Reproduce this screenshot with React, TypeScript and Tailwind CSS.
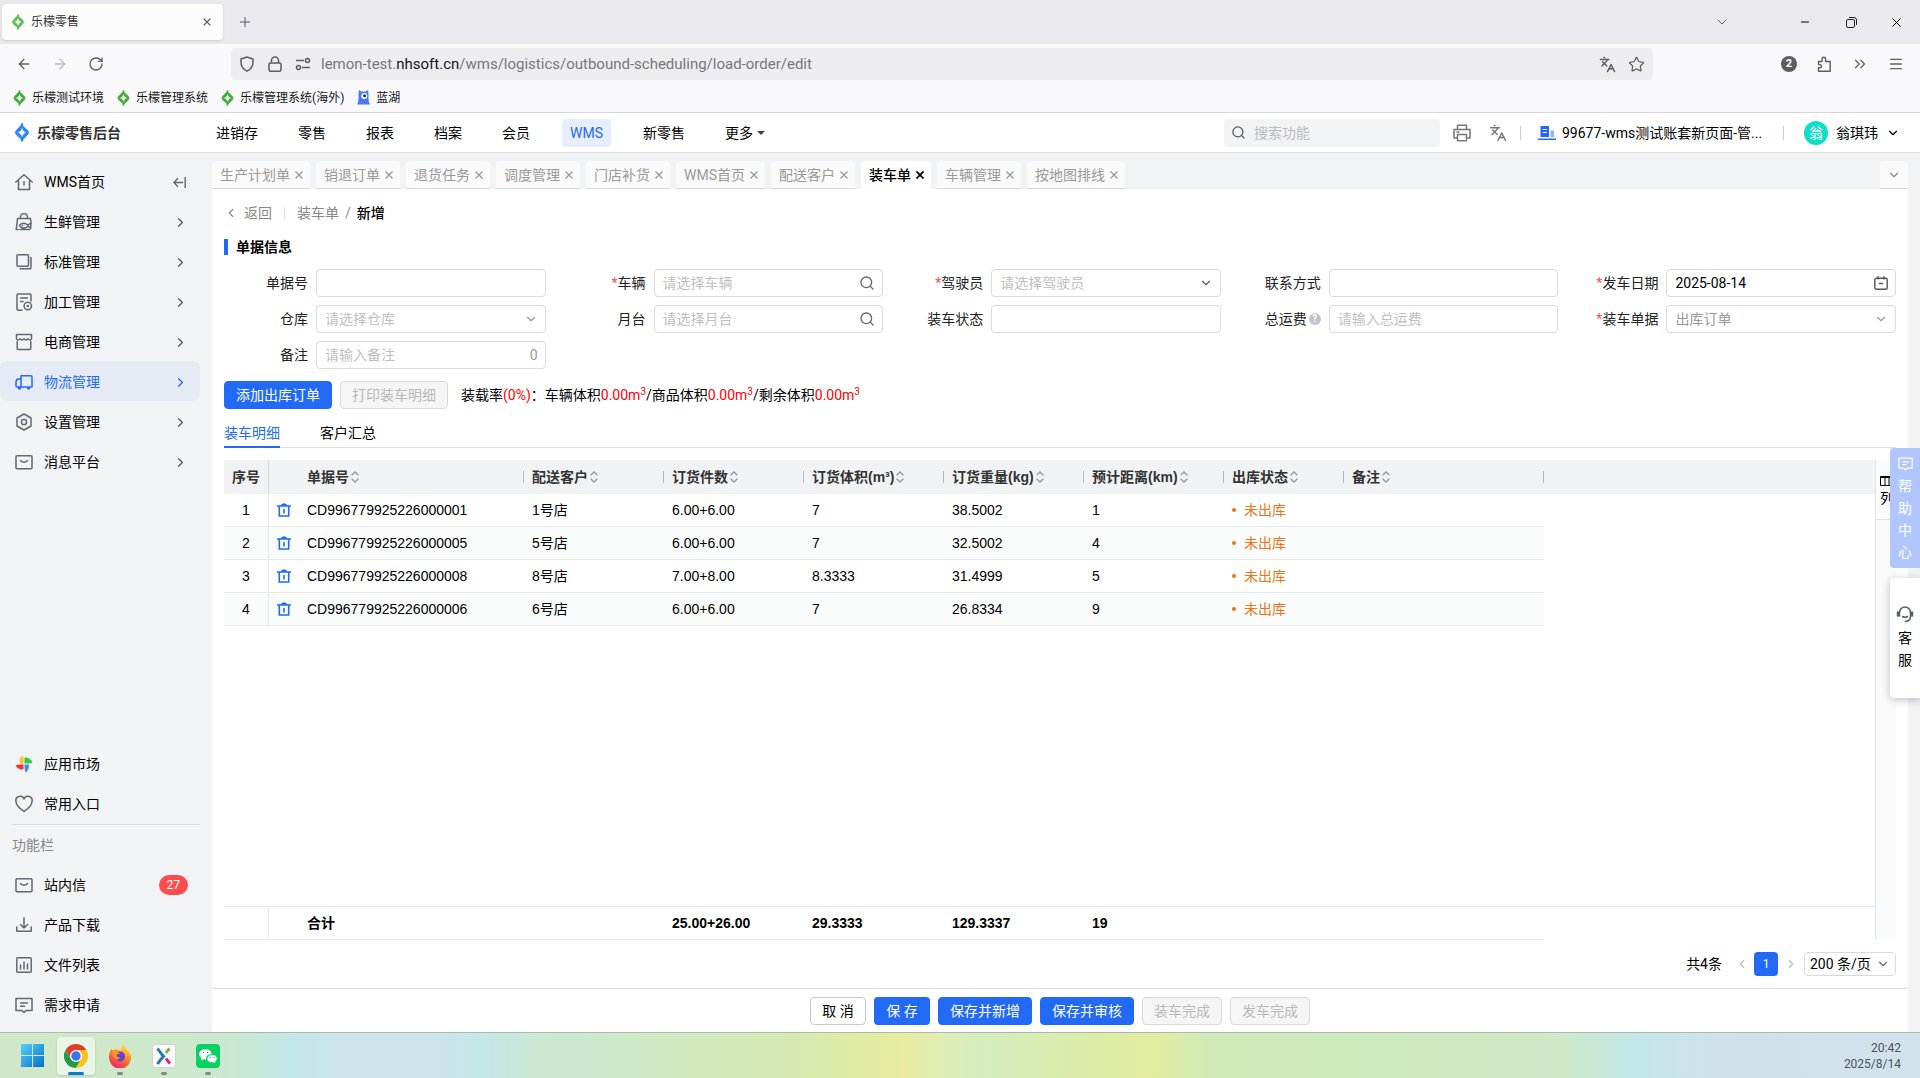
// App.tsx
// WMS 装车单新增页（含浏览器外框与任务栏）

import React from 'react';
import { ArrowLeft, ArrowRight, ChevronDown, ChevronLeft, ChevronRight, ChevronsRight, Languages, Menu, Minus, Plus, RotateCw, Search, Star, X } from 'lucide-react';

const FONT = "font-['Roboto','Noto_Sans_CJK_SC',sans-serif]";
const TABLE_FONT = "font-['Liberation_Sans','Noto_Sans_CJK_SC',sans-serif]";

// ---------- 图标 ----------

const LemonLogo = ({ className }: { className: string }) => (
  <svg viewBox="0 0 14 18" className={className} fill="currentColor" aria-hidden="true">
    <path
      fillRule="evenodd"
      d="M6 .8 8 0v2.6l4.6 4.2q1 .9 1 2.2t-1 2.2L8 16v1.2L6 18v-2.4l-4.6-4.4q-1-.9-1-2.2t1-2.2L6 2zM7 4.4Q6.3 8.2 2.8 9 6.3 9.8 7 13.6 7.7 9.8 11.2 9 7.7 8.2 7 4.4z"
    />
  </svg>
);

const Line = ({ children, size = 'size-[18px]' }: { children: React.ReactNode; size?: string }) => (
  <svg
    viewBox="0 0 18 18"
    className={`${size} shrink-0`}
    fill="none"
    stroke="currentColor"
    strokeWidth="1.5"
    strokeLinecap="round"
    strokeLinejoin="round"
    aria-hidden="true"
  >
    {children}
  </svg>
);

const icons: Record<string, React.ReactNode> = {
  home: <Line><path d="M.8 9 9 1.8 17.2 9M3.500 7.500v9h11v-9M9 8.500v3.500" /></Line>,
  fresh: (
    <Line>
      <path d="M5.500 5.200V4a3.500 3.500 0 0 1 7 0v1.200M3 16.500H1.200L2.600 5.400h12.800l.8 5.600M4.500 12.200q4-4 8.500 0l2.800-2v5l-2.800-2q-4.500 4-8.500-.4zM7.500 12.400h.1M5 16.600h10" />
    </Line>
  ),
  standard: <Line><rect x="2" y="1.800" width="11.500" height="11.500" rx="1" /><path d="M16 4.500V14q0 1.800-1.800 1.800H5" /></Line>,
  process: (
    <Line>
      <path d="M7 17.200H3.200q-1.200 0-1.200-1.200V2.200Q2 1 3.200 1h11.600Q16 1 16 2.200V8M5.500 5h7M5.500 8.500H8" />
      <circle cx="12.800" cy="13" r="3.700" /><circle cx="12.800" cy="13" r=".6" />
    </Line>
  ),
  shop: <Line><path d="M2.200 8.500v6.700q0 1.300 1.300 1.300h11q1.300 0 1.300-1.300V8.500M1.500 1.500h15v4.300q-1.300 2.200-3.700 0-1.900 2.200-3.800 0-1.900 2.200-3.800 0-2.400 2.200-3.700 0z" /></Line>,
  truck: <Line><path d="M6 14V2.800h9.800q1.200 0 1.200 1.200v10H2.200Q1 14 1 12.800V9.500Q1 6 3.500 6H6" /><path d="M4 15.300h1M13 15.300h1" strokeWidth="2.500" /></Line>,
  setting: <Line><path d="m9 1 7 4v8l-7 4-7-4V5z" /><circle cx="9" cy="9" r="2.600" /></Line>,
  message: <Line><rect x="1" y="2.800" width="16" height="13" rx="1" /><path d="M5.500 7.500q3.500 3.600 7 0" /></Line>,
  heart: <Line><path d="M9 16.500Q1 11 1 6.500A4.200 4.200 0 0 1 9 4a4.200 4.200 0 0 1 8 2.500Q17 11 9 16.500z" /></Line>,
  download: <Line><path d="M1.800 11v4.200h14.400V11M9 2v9.500M5.500 8.500 9 12l3.500-3.500" /></Line>,
  file: <Line><rect x="1.800" y="1.800" width="14.400" height="14.400" rx="1" /><path d="M5.500 9v4M9 6v7M12.500 8v5" /></Line>,
  request: <Line><path d="M1 2.500h16v12h-6l-2 2-2-2H1zM5.500 7h7M5.500 10.300h4" /></Line>,
  market: (
    <svg viewBox="0 0 18 18" className="size-[18px] shrink-0" aria-hidden="true">
      <path d="M8.500 8.500H5.200Q3 4 7.500.6q1.300 0 1 7.900z" fill="#fb3" />
      <path d="M9.500 8.500V2.600Q14.500 1.800 17.400 7q0 1.500-7.900 1.500z" fill="#2fcb3c" />
      <path d="M9.500 9.500h4.200Q14.500 14 11 17.400q-1.500 0-1.500-7.900z" fill="#3c8cf8" />
      <path d="M8.500 9.500v4.800Q3.500 15 .6 10.800q0-1.300 7.900-1.300z" fill="#f5302e" />
    </svg>
  ),
};

const SortIcon = () => (
  <svg viewBox="0 0 8 12" className="h-3 w-2 shrink-0" fill="none" stroke="#999" strokeWidth="1.400" aria-hidden="true">
    <path d="M.6 4.200 4 1l3.400 3.200M.6 7.800 4 11l3.400-3.200" />
  </svg>
);

const TrashIcon = () => (
  <svg viewBox="0 0 14 14" className="size-[14px]" fill="none" stroke="currentColor" strokeWidth="1.600" aria-hidden="true">
    <path d="M0 3h14M2.300 3v10h9.400V3M7 6v4.500" />
    <path d="M3.500 2.800Q4.200.2 7 .2t3.500 2.600z" fill="currentColor" stroke="none" />
  </svg>
);

const CalendarIcon = () => (
  <svg viewBox="0 0 14 14" className="size-[14px]" fill="none" stroke="currentColor" strokeWidth="1.400" strokeLinecap="round" aria-hidden="true">
    <rect x=".8" y="2.300" width="12.400" height="10.900" rx="1.500" />
    <path d="M4 .8V3M10 .8V3M5.500 7.500h3" />
  </svg>
);

// ---------- 数据 ----------

const bookmarks = ['乐檬测试环境', '乐檬管理系统', '乐檬管理系统(海外)'];
const navItems = ['进销存', '零售', '报表', '档案', '会员', 'WMS', '新零售'];
const pageTabs = ['生产计划单', '销退订单', '退货任务', '调度管理', '门店补货', 'WMS首页', '配送客户', '装车单', '车辆管理', '按地图排线'];

const sideMenu = [
  { icon: 'home', name: 'WMS首页' },
  { icon: 'fresh', name: '生鲜管理' },
  { icon: 'standard', name: '标准管理' },
  { icon: 'process', name: '加工管理' },
  { icon: 'shop', name: '电商管理' },
  { icon: 'truck', name: '物流管理' },
  { icon: 'setting', name: '设置管理' },
  { icon: 'message', name: '消息平台' },
];

const toolMenu = [
  { icon: 'message', name: '站内信', count: 27 },
  { icon: 'download', name: '产品下载' },
  { icon: 'file', name: '文件列表' },
  { icon: 'request', name: '需求申请' },
];

interface FieldDef {
  id: string;
  label: string;
  kind?: 'select' | 'search' | 'date' | 'count';
  placeholder?: string;
  value?: string;
  required?: boolean;
  help?: boolean;
  dark?: boolean;
}

const fields: FieldDef[] = [
  { id: 'orderNo', label: '单据号' },
  { id: 'vehicle', label: '车辆', kind: 'search', placeholder: '请选择车辆', required: true },
  { id: 'driver', label: '驾驶员', kind: 'select', placeholder: '请选择驾驶员', required: true, dark: true },
  { id: 'contact', label: '联系方式' },
  { id: 'date', label: '发车日期', kind: 'date', value: '2025-08-14', required: true },
  { id: 'warehouse', label: '仓库', kind: 'select', placeholder: '请选择仓库' },
  { id: 'platform', label: '月台', kind: 'search', placeholder: '请选择月台' },
  { id: 'status', label: '装车状态' },
  { id: 'freight', label: '总运费', placeholder: '请输入总运费', help: true },
  { id: 'source', label: '装车单据', kind: 'select', value: '出库订单', required: true },
  { id: 'remark', label: '备注', kind: 'count', placeholder: '请输入备注' },
];

const columns = ['单据号', '配送客户', '订货件数', '订货体积(m³)', '订货重量(kg)', '预计距离(km)', '出库状态', '备注'];

const rows = [
  ['CD996779925226000001', '1号店', '6.00+6.00', '7', '38.5002', '1'],
  ['CD996779925226000005', '5号店', '6.00+6.00', '7', '32.5002', '4'],
  ['CD996779925226000008', '8号店', '7.00+8.00', '8.3333', '31.4999', '5'],
  ['CD996779925226000006', '6号店', '6.00+6.00', '7', '26.8334', '9'],
];

const totals = ['合计', '', '25.00+26.00', '29.3333', '129.3337', '19', '', ''];

// ---------- 浏览器外框 ----------

const BrowserChrome = () => (
  <div className="border-b border-[#d6d6da] bg-[#f9f9fb] text-[#5b5b66]">
    <div className="flex h-11 items-center bg-[#eae9ee] pl-[2px]">
      <div className="flex h-9 w-[221px] items-center rounded-[4px] bg-[#fcfcfd] pl-[9px] pr-[10px] text-xs shadow-sm">
        <LemonLogo className="h-4 w-[14px] text-[#5dbf56]" />
        <span className="ml-[6px] flex-1 text-[#333]">乐檬零售</span>
        <button aria-label="关闭标签页"><X className="size-3" strokeWidth={2.2} /></button>
      </div>
      <button aria-label="新标签页" className="ml-[14px]"><Plus className="size-4" strokeWidth={1.5} /></button>
      <div className="ml-auto flex items-center pr-4">
        <button aria-label="所有标签页" className="mr-[69px]"><ChevronDown className="size-4" strokeWidth={1.5} /></button>
        <button aria-label="最小化" className="mr-[35px]"><Minus className="size-3 text-black" strokeWidth={2} /></button>
        <button aria-label="还原" className="mr-8">
          <svg viewBox="0 0 11 11" className="size-[11px]" fill="none" stroke="#222" aria-hidden="true">
            <rect x=".5" y="2.500" width="8" height="8" rx="1.500" />
            <path d="M3 .5h5q2.500 0 2.500 2.500v5" />
          </svg>
        </button>
        <button aria-label="关闭窗口"><X className="size-[15px] text-black" strokeWidth={1.6} /></button>
      </div>
    </div>

    <div className="flex h-10 items-center pb-1 pt-1">
      <div className="flex w-[231px] items-center gap-5 pl-4">
        <button aria-label="后退"><ArrowLeft className="size-4" /></button>
        <button aria-label="前进" className="text-[#bdbdc3]"><ArrowRight className="size-4" /></button>
        <button aria-label="刷新"><RotateCw className="size-4" /></button>
      </div>
      <div className="flex h-8 flex-1 items-center rounded-[4px] bg-[#ededef] px-2">
        <svg viewBox="0 0 16 16" className="size-4" fill="none" stroke="currentColor" strokeWidth="1.500" aria-hidden="true">
          <path d="M8 1 14 3v3.500Q14 12 8 15.200 2 12 2 6.500V3z" strokeLinejoin="round" />
        </svg>
        <svg viewBox="0 0 16 16" className="ml-3 size-4" fill="none" stroke="currentColor" strokeWidth="1.500" aria-hidden="true">
          <rect x="2" y="7" width="12" height="8.200" rx="1.500" />
          <path d="M4.500 7V4.500a3.500 3.500 0 0 1 7 0V7" />
        </svg>
        <svg viewBox="0 0 16 16" className="ml-3 size-4" fill="none" stroke="currentColor" strokeWidth="1.500" aria-hidden="true">
          <path d="M1 4.500h8M7 11.500h8" />
          <circle cx="12.500" cy="4.500" r="2" /><circle cx="3.500" cy="11.500" r="2" />
        </svg>
        <span className="ml-[10px] flex-1 text-[15px] text-[#77777d]">
          lemon-test.<span className="text-[#15141a]">nhsoft.cn</span>/wms/logistics/outbound-scheduling/load-order/edit
        </span>
        <button aria-label="翻译" className="mr-3"><Languages className="size-[17px]" /></button>
        <button aria-label="收藏"><Star className="size-[17px]" strokeWidth={1.7} /></button>
      </div>
      <div className="flex w-[267px] items-center justify-end gap-[19px] pr-4">
        <span className="flex size-4 items-center justify-center rounded-full bg-[#5b5b66] text-[11px] font-bold leading-4 text-white">2</span>
        <svg viewBox="0 0 16 16" className="size-4" fill="none" stroke="currentColor" strokeWidth="1.400" strokeLinejoin="round" aria-hidden="true">
          <path d="M2.500 5.500H6V3a1.800 1.800 0 0 1 3.600 0v2.500h4.600v9.800H2.500v-3.500h1.300a1.600 1.600 0 0 0 0-3.200H2.500z" />
        </svg>
        <ChevronsRight className="size-[18px]" strokeWidth={1.6} />
        <Menu className="size-4" strokeWidth={2} />
      </div>
    </div>

    <div className="flex h-7 items-center gap-[13px] pl-[13px] text-xs text-[#15141a]">
      {bookmarks.map((name) => (
        <a key={name} href="#" className="flex items-center gap-[6px]">
          <LemonLogo className="h-4 w-[13px] text-[#3fae38]" />
          {name}
        </a>
      ))}
      <a href="#" className="flex items-center gap-[6px]">
        <svg viewBox="0 0 13 16" className="h-4 w-[13px]" aria-hidden="true">
          <path d="M2 0l2.500 1.600h4L11 0l.5 4v5q0 3 1.500 5.500H0Q1.500 12 1.500 9V4z" fill="#4a7bf2" />
          <circle cx="7.200" cy="6" r="3" fill="#fff" /><circle cx="7.600" cy="5.800" r="1.500" fill="#1b2c66" />
        </svg>
        蓝湖
      </a>
    </div>
  </div>
);

// ---------- 顶部导航 ----------

const AppHeader = () => (
  <header className="flex h-10 items-center border-b border-[#dcdcdc] bg-white text-sm">
    <div className="flex w-52 items-center gap-[7px] pl-[14px] font-bold text-[#333]">
      <LemonLogo className="h-[19px] w-4 text-[#2f86f6]" />
      乐檬零售后台
    </div>
    <nav className="flex items-center gap-6">
      {navItems.map((item) => (
        <a
          key={item}
          href="#"
          className={`rounded-[4px] px-2 leading-7 ${item === 'WMS' ? 'bg-[#e6edfc] text-[#226af5]' : 'text-black'}`}
        >
          {item}
        </a>
      ))}
      <button className="flex items-center gap-1 px-2 leading-7">
        更多
        <span className="border-x-4 border-t-4 border-x-transparent border-t-[#444]" />
      </button>
    </nav>
    <label className="ml-auto flex h-7 w-[216px] items-center gap-2 rounded-[4px] bg-[#f2f3f5] px-[7px]">
      <Search className="size-[15px] shrink-0 text-[#555]" />
      <input aria-label="搜索功能" placeholder="搜索功能" className="w-full bg-transparent outline-none placeholder:text-[#bbb]" />
    </label>
    <button aria-label="打印" className="ml-[13px] text-[#777]">
      <Line>
        <path d="M4.500 5.500V1.200h9v4.300M4.500 14H1V5.500h16V14h-3.500M4.500 10.500h9v6.300h-9zM4 8h2" />
      </Line>
    </button>
    <button aria-label="语言" className="ml-[18px] text-[#777]"><Languages className="size-[18px]" /></button>
    <span className="ml-[13px] h-[14px] w-px bg-[#ccc]" />
    <svg viewBox="0 0 18 16" className="ml-[17px] h-4 w-[18px]" aria-hidden="true">
      <path d="M2.500 1h8.500v11H2.500z" fill="#226af5" />
      <path d="M12.500 5.500H16v6.500h-3.500z" fill="#226af5" opacity=".5" />
      <path d="M0 13.500h18V15H0z" fill="#226af5" />
      <path d="M4.700 4.500h4M4.700 7.500h4" stroke="#fff" strokeWidth="1.200" />
    </svg>
    <button className="ml-[6px] w-[200px] whitespace-nowrap text-left">99677-wms测试账套新页面-管...</button>
    <span className="ml-[21px] h-[14px] w-px bg-[#ccc]" />
    <button className="ml-5 mr-5 flex items-center gap-2">
      <span className="flex size-6 items-center justify-center rounded-full bg-[#12dcc8] text-white">翁</span>
      翁琪玮
      <ChevronDown className="size-[14px]" />
    </button>
  </header>
);

// ---------- 侧边栏 ----------

const SideBar = () => (
  <aside className="flex w-[212px] shrink-0 flex-col pb-[7px] pt-2 text-sm">
    <ul className="flex-1">
      {sideMenu.map(({ icon, name }, i) => {
        const active = name === '物流管理';
        return (
          <li key={name}>
            <a
              href="#"
              className={`flex h-10 w-[200px] items-center gap-[11px] rounded-lg pl-[15px] pr-3 pt-[2px] ${active ? 'bg-[#e6eaf5] text-[#226af5]' : ''}`}
            >
              <span className={active ? '' : 'text-[#646672]'}>{icons[icon]}</span>
              <span className="flex-1">{name}</span>
              {i === 0 ? (
                <svg viewBox="0 0 13 11" className="mr-[2px] h-[11px] w-[13px]" fill="none" stroke="#666" strokeWidth="1.400" aria-hidden="true">
                  <path d="M12.200 0v11M10 5.500H1M5 1.200.9 5.500 5 9.800" />
                </svg>
              ) : (
                <ChevronRight className={`size-[15px] ${active ? '' : 'text-[#555]'}`} strokeWidth={2} />
              )}
            </a>
          </li>
        );
      })}
    </ul>

    <div className="ml-3 mr-3 border-b border-[#d9dadc]">
      <a href="#" className="flex h-10 items-center gap-[11px] pl-[3px]">{icons.market}应用市场</a>
      <a href="#" className="flex h-10 items-center gap-[11px] pl-[3px]">
        <span className="text-[#646672]">{icons.heart}</span>常用入口
      </a>
    </div>
    <h2 className="px-3 leading-10 text-[#888]">功能栏</h2>
    <ul>
      {toolMenu.map(({ icon, name, count }) => (
        <li key={name}>
          <a href="#" className="flex h-10 items-center gap-[11px] pl-[15px] pr-6">
            <span className="text-[#646672]">{icons[icon]}</span>
            <span className="flex-1">{name}</span>
            {count && <span className="rounded-full bg-[#ff4d4f] px-2 text-xs leading-5 text-white">{count}</span>}
          </a>
        </li>
      ))}
    </ul>
  </aside>
);

// ---------- 表单 ----------

const Field = ({ field }: { field: FieldDef }) => {
  const { id, label, kind, placeholder, value, required, help, dark } = field;
  const box = 'h-7 w-full rounded-[4px] border border-[#d9d9d9] bg-white px-2 outline-none placeholder:text-[#bfbfbf]';
  return (
    <div className="flex items-center">
      <label htmlFor={id} className="flex w-[92px] shrink-0 items-center justify-end pr-2 text-[#222]">
        {required && <span className="text-[#ff4d4f]">*</span>}
        {label}
        {help && (
          <span className="ml-[2px] flex size-3 items-center justify-center rounded-full bg-[#c0c4cc] text-[10px] font-bold leading-3 text-white">?</span>
        )}
      </label>
      <div className="relative min-w-0 flex-1">
        {kind === 'select' ? (
          <select id={id} className={`${box} appearance-none ${value ? 'text-[#999]' : 'text-[#bfbfbf]'}`}>
            <option>{value || placeholder}</option>
          </select>
        ) : (
          <input id={id} type="text" defaultValue={value} placeholder={placeholder} className={box} />
        )}
        <span className="pointer-events-none absolute inset-y-0 right-2 flex items-center">
          {kind === 'select' && <ChevronDown className={`size-[14px] ${dark ? 'text-[#555]' : 'text-[#999]'}`} />}
          {kind === 'search' && <Search className="size-4 text-[#666]" />}
          {kind === 'date' && <span className="text-[#555]"><CalendarIcon /></span>}
          {kind === 'count' && <span className="text-[#999]">0</span>}
        </span>
      </div>
    </div>
  );
};

const Volume = ({ label }: { label: string }) => (
  <>
    {label}
    <span className="text-[#f00]">0.00m<sup className="text-[10px]">3</sup></span>
  </>
);

// ---------- 表格 ----------

const ColGroup = () => (
  <colgroup>
    <col className="w-[45px]" />
    <col className="w-[30px]" />
    <col className="w-[225px]" />
    <col className="w-[140px]" />
    <col className="w-[140px]" />
    <col className="w-[140px]" />
    <col className="w-[140px]" />
    <col className="w-[140px]" />
    <col className="w-[120px]" />
    <col className="w-[200px]" />
    <col />
  </colgroup>
);

const DetailTable = () => (
  <div className={`flex flex-1 ${TABLE_FONT}`}>
    <div className="flex min-w-0 flex-1 flex-col">
      <table className="w-full table-fixed border-separate border-spacing-0">
        <ColGroup />
        <thead>
          <tr className="h-[34px] bg-[#f1f2f4] text-[#333]">
            <th className="border-r border-[#d5d7db] p-0">序号</th>
            <th aria-label="操作" className="p-0" />
            {columns.map((col) => (
              <th key={col} className="p-0 pl-2 text-left">
                <span className="flex items-center gap-[2px]">
                  {col}
                  <SortIcon />
                  <span className="ml-auto h-3 w-px bg-[#b4b8c5]" />
                </span>
              </th>
            ))}
            <th className="p-0" />
          </tr>
        </thead>
        <tbody className="[&_td]:border-b [&_td]:border-[#e6e8e9]">
          {rows.map((row, i) => (
            <tr key={row[0]} className="h-[33px] [&_td]:px-2 even:[&_td]:bg-[#fafcfb]">
              <td className="border-r text-center">{i + 1}</td>
              <td>
                <button aria-label="删除" className="block text-[#226af5]"><TrashIcon /></button>
              </td>
              {row.map((cell, j) => <td key={j}>{cell}</td>)}
              <td className="text-[#ed7517]">
                <span className="flex items-center gap-2">
                  <span className="size-1 rounded-full bg-[#ed7517]" />
                  未出库
                </span>
              </td>
              <td />
            </tr>
          ))}
        </tbody>
      </table>
      <div className="mt-auto border-t border-[#e6e8e9]">
        <table className="w-full table-fixed border-separate border-spacing-0">
          <ColGroup />
          <tbody>
            <tr className="h-[33px] font-bold [&_td]:border-b [&_td]:border-[#e6e8e9] [&_td]:px-2">
              <td className="border-r" />
              <td />
              {totals.map((cell, i) => <td key={i}>{cell}</td>)}
            </tr>
          </tbody>
        </table>
      </div>
    </div>
    <div className="w-[21px] border-l border-[#e4e6e8] bg-[#fafbfd]">
      <button className="flex h-[60px] w-full flex-col items-start overflow-hidden border-b border-[#e0e2e4] pl-1 pt-3">
        <svg viewBox="0 0 14 16" className="h-4 w-[14px] shrink-0" fill="none" stroke="#000" aria-hidden="true">
          <path d="M.5 4.500h13v9H.5zM.5 5.500h13M5 5v8M9 5v8" />
        </svg>
        <span className="leading-5">列</span>
      </button>
    </div>
  </div>
);

const primaryBtn = 'h-7 rounded-[4px] bg-[#226af5] px-[11px] text-white border border-[#226af5]';
const disabledBtn = 'h-7 rounded-[4px] border border-[#d9d9d9] bg-[#f5f5f5] px-[11px] text-[#b8b8b8]';

const Workspace = () => (
  <main className="mr-3 flex min-w-0 flex-1 flex-col text-sm">
    <div className="flex gap-[6px] pt-2">
      {pageTabs.map((name) => {
        const active = name === '装车单';
        return (
          <div
            key={name}
            className={`flex h-7 items-center gap-[5px] rounded-t-[4px] pl-2 pr-[7px] ${
              active ? 'bg-white font-medium text-black' : 'border-b border-[#d9d9d9] bg-[#fafafa] text-[#999]'
            }`}
          >
            <a href="#">{name}</a>
            <button aria-label={`关闭${name}`}>
              <svg viewBox="0 0 8 8" className="size-2" stroke="currentColor" strokeWidth={active ? 1.8 : 1.3} aria-hidden="true">
                <path d="m.5.5 7 7m0-7-7 7" />
              </svg>
            </button>
          </div>
        );
      })}
      <button aria-label="更多页签" className="ml-auto flex h-7 w-7 items-center justify-center rounded-t-[4px] border-b border-[#d9d9d9] bg-[#fafafa] text-[#888]">
        <ChevronDown className="size-[14px]" />
      </button>
    </div>

    <div className="flex flex-1 flex-col bg-white px-3 pb-3">
      <div className="flex h-12 items-center text-[#888]">
        <a href="#" className="flex items-center gap-[6px]"><ChevronLeft className="size-[14px]" />返回</a>
        <span className="mx-3 h-3 w-px bg-[#ddd]" />
        <span>装车单</span>
        <span className="mx-[6px]">/</span>
        <span className="font-medium text-black">新增</span>
      </div>
      <div className="flex h-5 items-center gap-2">
        <span className="h-4 w-1 bg-[#226af5]" />
        <h1 className="font-bold">单据信息</h1>
      </div>
      <form className="mt-3 grid grid-cols-5 gap-x-4 gap-y-2">
        {fields.map((field) => <Field key={field.id} field={field} />)}
      </form>

      <div className="mt-3 flex items-center gap-2">
        <button className={primaryBtn}>添加出库订单</button>
        <button disabled className={disabledBtn}>打印装车明细</button>
        <p className="ml-[5px]">
          装载率<span className="text-[#f00]">(0%)</span>：
          <Volume label="车辆体积" />
          <Volume label="/商品体积" />
          <Volume label="/剩余体积" />
        </p>
      </div>

      <div className="mt-[7px] flex gap-10 border-b border-[#dcdee0]" role="tablist">
        <button role="tab" aria-selected="true" className="-mb-px h-8 border-b-2 border-[#226af5] pt-1 text-[#226af5]">装车明细</button>
        <button role="tab" aria-selected="false" className="-mb-px h-8 border-b-2 border-transparent pt-1">客户汇总</button>
      </div>

      <div className="mt-3 flex flex-1">
        <DetailTable />
      </div>

      <div className="mt-3 flex h-6 items-center justify-end">
        <span className="mr-[13px]">共4条</span>
        <button aria-label="上一页" className="mr-[5px] text-[#bbb]"><ChevronLeft className="size-[14px]" /></button>
        <button className="size-6 rounded-[4px] bg-[#226af5] text-xs text-white">1</button>
        <button aria-label="下一页" className="mx-[6px] text-[#bbb]"><ChevronRight className="size-[14px]" /></button>
        <span className="relative">
          <select aria-label="每页条数" className="h-6 w-[92px] appearance-none rounded-[4px] border border-[#d9d9d9] bg-white pl-[5px]">
            <option>200 条/页</option>
          </select>
          <ChevronDown className="pointer-events-none absolute right-[6px] top-[5px] size-[14px] text-[#666]" />
        </span>
      </div>
    </div>

    <div className="flex h-11 items-center justify-center gap-2 border-t border-[#dcdcdc] bg-white">
      <button className="h-7 w-14 rounded-[4px] border border-[#c8c8c8]">取 消</button>
      <button className="h-7 w-14 rounded-[4px] bg-[#226af5] text-white">保 存</button>
      <button className={primaryBtn}>保存并新增</button>
      <button className={primaryBtn}>保存并审核</button>
      <button disabled className={disabledBtn}>装车完成</button>
      <button disabled className={disabledBtn}>发车完成</button>
    </div>
  </main>
);

// 右侧悬浮入口
const FloatingHelp = () => (
  <div className="absolute right-0 top-[295px] flex w-[30px] flex-col gap-[10px] text-sm leading-[22px]">
    <button className="flex h-[120px] flex-col items-center rounded-l-[4px] bg-[#b1c5ff] pt-2 text-white">
      <span className="mb-1"><Line size="size-[15px]"><path d="M1 2.500h16v12h-6l-2 2-2-2H1zM5.500 7h7M5.500 10.300h4" /></Line></span>
      <span>帮</span><span>助</span><span>中</span><span>心</span>
    </button>
    <button className="flex h-[120px] flex-col items-center justify-center rounded-l-[4px] bg-white shadow-[0_2px_8px_rgba(0,0,0,0.25)]">
      <span className="mb-1 text-[#5b5d6b]">
        <Line>
          <path d="M3.500 11V7.500a5.500 5.500 0 0 1 11 0V11q0 5-5 5.500M6.500 11.500q2.500 1.500 5 0" />
          <path d="M2 7.500v3M16 7.500v3" strokeWidth="2.500" />
        </Line>
      </span>
      <span>客</span><span>服</span>
    </button>
  </div>
);

// ---------- 任务栏 ----------

const TaskButton = ({ label, active, running, children }: { label: string; active?: boolean; running?: boolean; children: React.ReactNode }) => (
  <button
    aria-label={label}
    className={`relative flex h-[38px] w-[38px] items-center justify-center rounded-[4px] ${active ? 'bg-white/55 shadow-sm' : ''}`}
  >
    {children}
    {active && <span className="absolute bottom-0 h-[3px] w-4 rounded-full bg-[#0a78d4]" />}
    {running && <span className="absolute bottom-0 h-[3px] w-[6px] rounded-full bg-[#7d8b83]" />}
  </button>
);

const TaskBar = () => (
  <footer className="flex h-[46px] items-center border-t border-[#aeb9b4] bg-[linear-gradient(90deg,#d0e8c6_0%,#cde8cb_10%,#c8e8d5_13%,#c1e7e8_15%,#cfe3ea_18%,#cfe3ea_22%,#c4e7e8_25%,#cbe8d4_28%,#cfe9c4_34%,#d6e9b2_41%,#e0eca2_45%,#e8eba0_47%,#e0edb4_49%,#d5edbf_51%,#dcebaa_56%,#e2ed9f_60%,#cfeab8_63%,#cdeabd_70%,#d0e8c6_81%,#c2e7e8_85%,#cfe2ea_89%,#d0e3ec_100%)] pl-[13px] pr-[19px]">
    <div className="flex items-center gap-[6px]">
      <TaskButton label="开始">
        <svg viewBox="0 0 23 23" className="size-[23px]" aria-hidden="true">
          <defs>
            <linearGradient id="win" x1="0" y1="0" x2="1" y2="1">
              <stop offset="0" stopColor="#55d0f8" />
              <stop offset="1" stopColor="#0670cb" />
            </linearGradient>
          </defs>
          <path d="M0 0h11v11H0zM12 0h11v11H12zM0 12h11v11H0zM12 12h11v11H12z" fill="url(#win)" />
        </svg>
      </TaskButton>
      <TaskButton label="Chrome" active>
        <svg viewBox="0 0 24 24" className="size-6" aria-hidden="true">
          <path d="M12 6h10.400A12 12 0 0 0 1.600 6l5.200 9z" fill="#e33b2e" />
          <path d="M1.600 6A12 12 0 0 0 12 24l5.200-9H6.800z" fill="#229a48" />
          <path d="m17.200 15-5.200 9A12 12 0 0 0 22.400 6H12z" fill="#fdc31c" />
          <circle cx="12" cy="12" r="6" fill="#fff" />
          <circle cx="12" cy="12" r="4.700" fill="#3076ec" />
        </svg>
      </TaskButton>
      <TaskButton label="Firefox" running>
        <svg viewBox="0 0 24 24" className="size-6" aria-hidden="true">
          <defs>
            <linearGradient id="fx" x1=".8" y1="0" x2=".3" y2="1">
              <stop offset="0" stopColor="#fff04a" />
              <stop offset=".45" stopColor="#ff8a1e" />
              <stop offset="1" stopColor="#ee1e6d" />
            </linearGradient>
          </defs>
          <path d="M15 .5q2.500 1.500 3.500 5 5 3 4.500 8.500A11 11 0 0 1 1 13Q1 7.500 4 4.500q0 1.500.8 2Q7 5 9.500 5.500 12 6 13.500 7 13 3.500 15 .5z" fill="url(#fx)" />
          <circle cx="12" cy="12.500" r="5" fill="#6a3fd0" />
          <path d="M4 8q4.500-1.500 8.500 1.500-4 .3-4 2.300 1 2 4 2-2 2.500-5 1.500Q4.500 13 4 8z" fill="#ff9226" />
        </svg>
      </TaskButton>
      <TaskButton label="X" running>
        <svg viewBox="0 0 24 24" className="size-6" fill="none" strokeWidth="3" aria-hidden="true">
          <rect x=".5" y=".5" width="23" height="23" rx="3" fill="#fbfbfb" stroke="#cfd4d2" strokeWidth="1" />
          <path d="M5.500 4.500q2.500 3.500 6 8Q8 16 5.500 20" stroke="#2277b8" />
          <path d="M17.500 4.500q-2 2-3.500 4.500" stroke="#6fb53c" />
          <path d="M14 14.500q2 3 4 5" stroke="#e61d7c" />
        </svg>
      </TaskButton>
      <TaskButton label="微信" running>
        <svg viewBox="0 0 24 24" className="size-6" aria-hidden="true">
          <rect width="24" height="24" rx="4" fill="#07d164" />
          <path d="M9.500 5q6 .5 6 5-6 .5-5.500 5.500l-2.500-.3L5 16.500l.5-2.300Q3 12.500 3 10q.5-4.500 6.500-5z" fill="#fff" />
          <path d="M16 10.500q5 .5 5 4.200 0 2-1.800 3.200l.3 1.600-2-1.100q-6.200.6-6.500-3.700.5-3.700 5-4.200z" fill="#fff" stroke="#07d164" strokeWidth=".6" />
          <path d="M7 8.500h1M11 8.500h1M14 13.500h1M17.500 13.500h1" stroke="#07b858" strokeWidth="1.200" />
        </svg>
      </TaskButton>
    </div>
    <div className="ml-auto text-right text-xs leading-4 text-[#4d5356]">
      <div>20:42</div>
      <div>2025/8/14</div>
    </div>
  </footer>
);

export default function App() {
  return (
    <div className={`flex min-h-screen flex-col bg-white text-black ${FONT}`}>
      <BrowserChrome />
      <AppHeader />
      <div className="relative flex flex-1 bg-[#f1f3f5]">
        <SideBar />
        <Workspace />
        <FloatingHelp />
      </div>
      <TaskBar />
    </div>
  );
}
